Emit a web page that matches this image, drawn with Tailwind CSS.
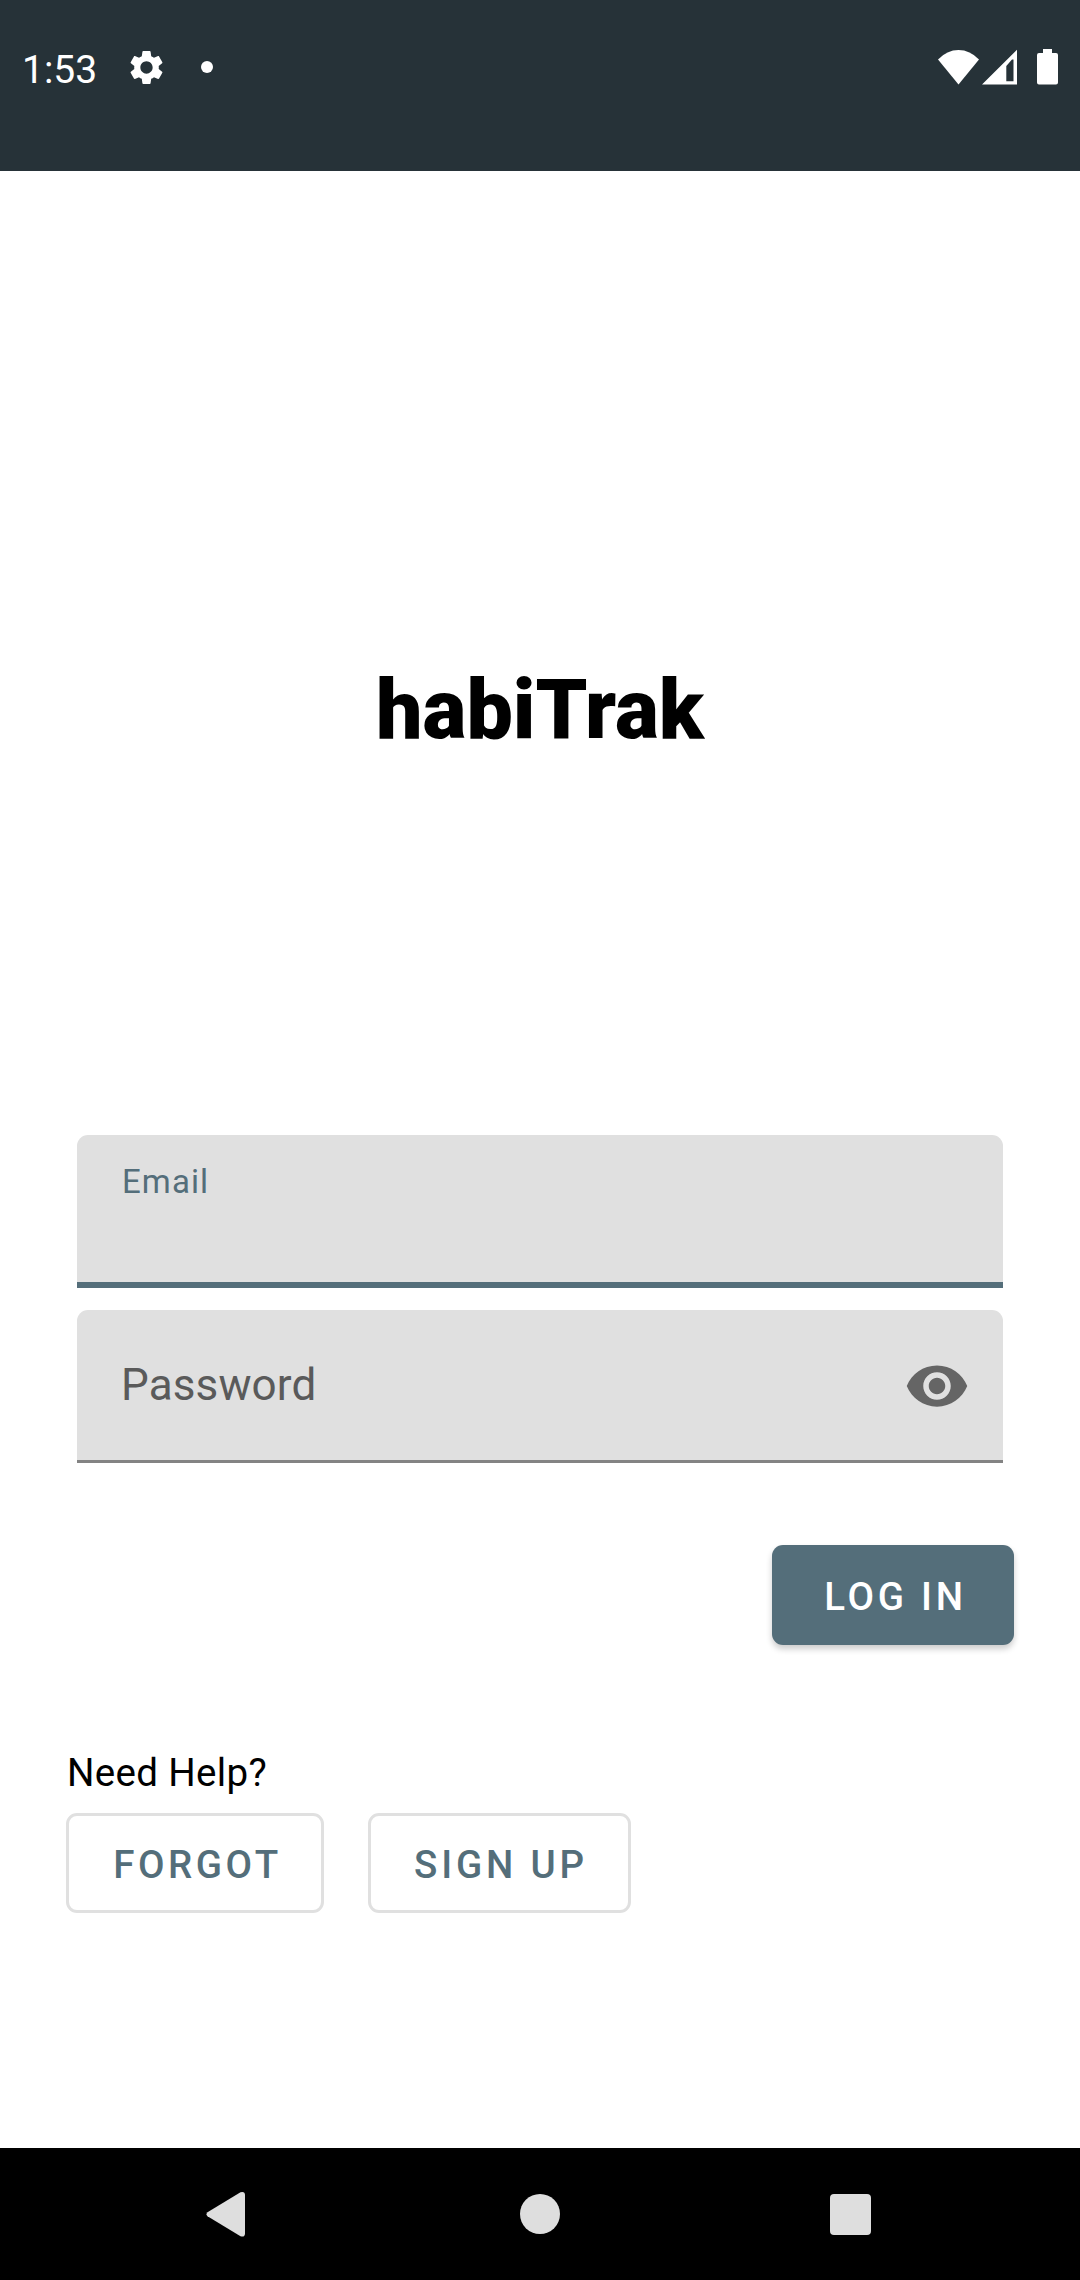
<!DOCTYPE html>
<html lang="en">
<head>
<meta charset="utf-8">
<title>habiTrak</title>
<script src="https://cdn.jsdelivr.net/npm/@tailwindcss/browser@4"></script>
</head>
<body class="bg-white">
<div class="flex h-[2280px] w-[1080px] flex-col overflow-hidden bg-white font-[Roboto,sans-serif] text-black">
  <header class="h-[171px] shrink-0 bg-[#263238]">
    <div class="flex h-[134px] items-center pr-[22px] pl-[22px] text-white">
      <span class="w-[104px] pt-[5px] text-[39px] leading-[46px]">1:53</span>
      <svg class="size-[41px]" viewBox="0 0 24 24" fill="currentColor"><path d="M19.14 12.94c.04-.3.06-.61.06-.94 0-.32-.02-.64-.07-.94l2.03-1.58c.18-.14.23-.41.12-.61l-1.92-3.32c-.12-.22-.37-.29-.59-.22l-2.39.96c-.5-.38-1.03-.7-1.62-.94l-.36-2.54c-.04-.24-.24-.41-.48-.41h-3.84c-.24 0-.43.17-.47.41l-.36 2.54c-.59.24-1.13.57-1.62.94l-2.39-.96c-.22-.08-.47 0-.59.22L2.74 8.87c-.12.21-.08.47.12.61l2.03 1.58c-.05.3-.09.63-.09.94s.02.64.07.94l-2.03 1.58c-.18.14-.23.41-.12.61l1.92 3.32c.12.22.37.29.59.22l2.39-.96c.5.38 1.03.7 1.62.94l.36 2.54c.05.24.24.41.48.41h3.84c.24 0 .44-.17.47-.41l.36-2.54c.59-.24 1.13-.56 1.62-.94l2.39.96c.22.08.47 0 .59-.22l1.92-3.32c.12-.22.07-.47-.12-.61l-2.01-1.58zM12 15.6c-1.98 0-3.6-1.62-3.6-3.6s1.620-3.6 3.6-3.6 3.6 1.62 3.6 3.6-1.62 3.6-3.6 3.6z"/></svg>
      <span class="ml-[34px] size-3 rounded-full bg-white"></span>
      <div class="ml-auto flex items-center">
        <svg class="h-[36px] w-[41px]" viewBox="0 0 41 36" fill="currentColor"><path d="M0 10.5Q9 1 20.500 1T41 10.500L20.500 35.500Z"/></svg>
        <svg class="ml-[3px] h-[36px] w-[35px]" viewBox="0 0 35 36" fill="currentColor" fill-rule="evenodd"><path d="M0 35.500 35 .8V35.500ZM24.300 17V32.200H31.500V10.500H30Z"/></svg>
        <svg class="ml-5 h-[36px] w-[21px]" viewBox="0 0 21 36" fill="currentColor"><path d="M6 0H15V4H19Q21 4 21 6V33.500Q21 35.500 19 35.500H2Q0 35.500 0 33.500V6Q0 4 2 4H6Z"/></svg>
      </div>
    </div>
  </header>

  <main class="flex grow flex-col">
    <h1 class="mt-[491px] text-center text-[82.500px] leading-[96px] font-black">habiTrak</h1>

    <form class="mt-[377px] flex flex-col px-[77px]">
      <div class="h-[153px] rounded-t-[11px] border-b-[6px] border-[#546e7a] bg-[#e0e0e0] px-[45px] pt-[27px]">
        <label class="block text-[33px] leading-[40px] tracking-[0.0333em] text-[#546e7a]">Email</label>
      </div>
      <div class="mt-[22px] flex h-[153px] items-center justify-between rounded-t-[11px] border-b-[3px] border-[#838383] bg-[#e0e0e0] pr-[33px] pl-11">
        <label class="text-[44px] leading-[52px] tracking-[0.003em] text-[#5a5a5a]">Password</label>
        <svg class="mt-[1px] size-[66px] text-[#656565]" viewBox="0 0 24 24" fill="currentColor"><path d="M12 4.500C7 4.500 2.730 7.610 1 12c1.730 4.390 6 7.500 11 7.500s9.270-3.110 11-7.500c-1.730-4.390-6-7.500-11-7.500zM12 17c-2.760 0-5-2.240-5-5s2.240-5 5-5 5 2.240 5 5-2.240 5-5 5zm0-8c-1.660 0-3 1.340-3 3s1.340 3 3 3 3-1.340 3-3-1.340-3-3-3z"/></svg>
      </div>
    </form>

    <button class="mt-[82px] mr-[66px] h-[100px] w-[242px] self-end rounded-[11px] bg-[#546e7a] pt-[3px] pl-[5px] text-[38.500px] font-medium tracking-[0.097em] text-white shadow-[0_4px_6px_rgba(0,0,0,0.2)]">LOG IN</button>

    <section class="mt-[105px] px-[66px]">
      <p class="pl-px text-[38.500px] leading-[46px] tracking-[0.009em]">Need Help?</p>
      <div class="mt-[17px] flex gap-11">
        <button class="h-[100px] w-[258px] rounded-[11px] border-[3px] border-[#e0e0e0] pt-[3px] pl-[5px] text-[38.500px] font-medium tracking-[0.092em] text-[#546e7a]">FORGOT</button>
        <button class="h-[100px] w-[263px] rounded-[11px] border-[3px] border-[#e0e0e0] pt-[3px] pl-[3px] text-[38.500px] font-medium tracking-[0.1em] text-[#546e7a]">SIGN UP</button>
      </div>
    </section>
  </main>

  <nav class="flex h-[132px] shrink-0 items-center justify-between bg-black pr-[209px] pl-[206px] text-[#dedede]">
    <svg class="h-[46px] w-[39px]" viewBox="0 0 39 46" fill="currentColor"><path d="M1.500 21.300 34.500 1.200Q39 0 39 4V42.500Q39 46.500 34.500 45.300L1.500 25.300Q-.5 23.300 1.500 21.300Z"/></svg>
    <span class="ml-[5px] size-10 rounded-full bg-[#dedede]"></span>
    <span class="size-[41px] rounded-[4px] bg-[#dedede]"></span>
  </nav>
</div>
</body>
</html>
